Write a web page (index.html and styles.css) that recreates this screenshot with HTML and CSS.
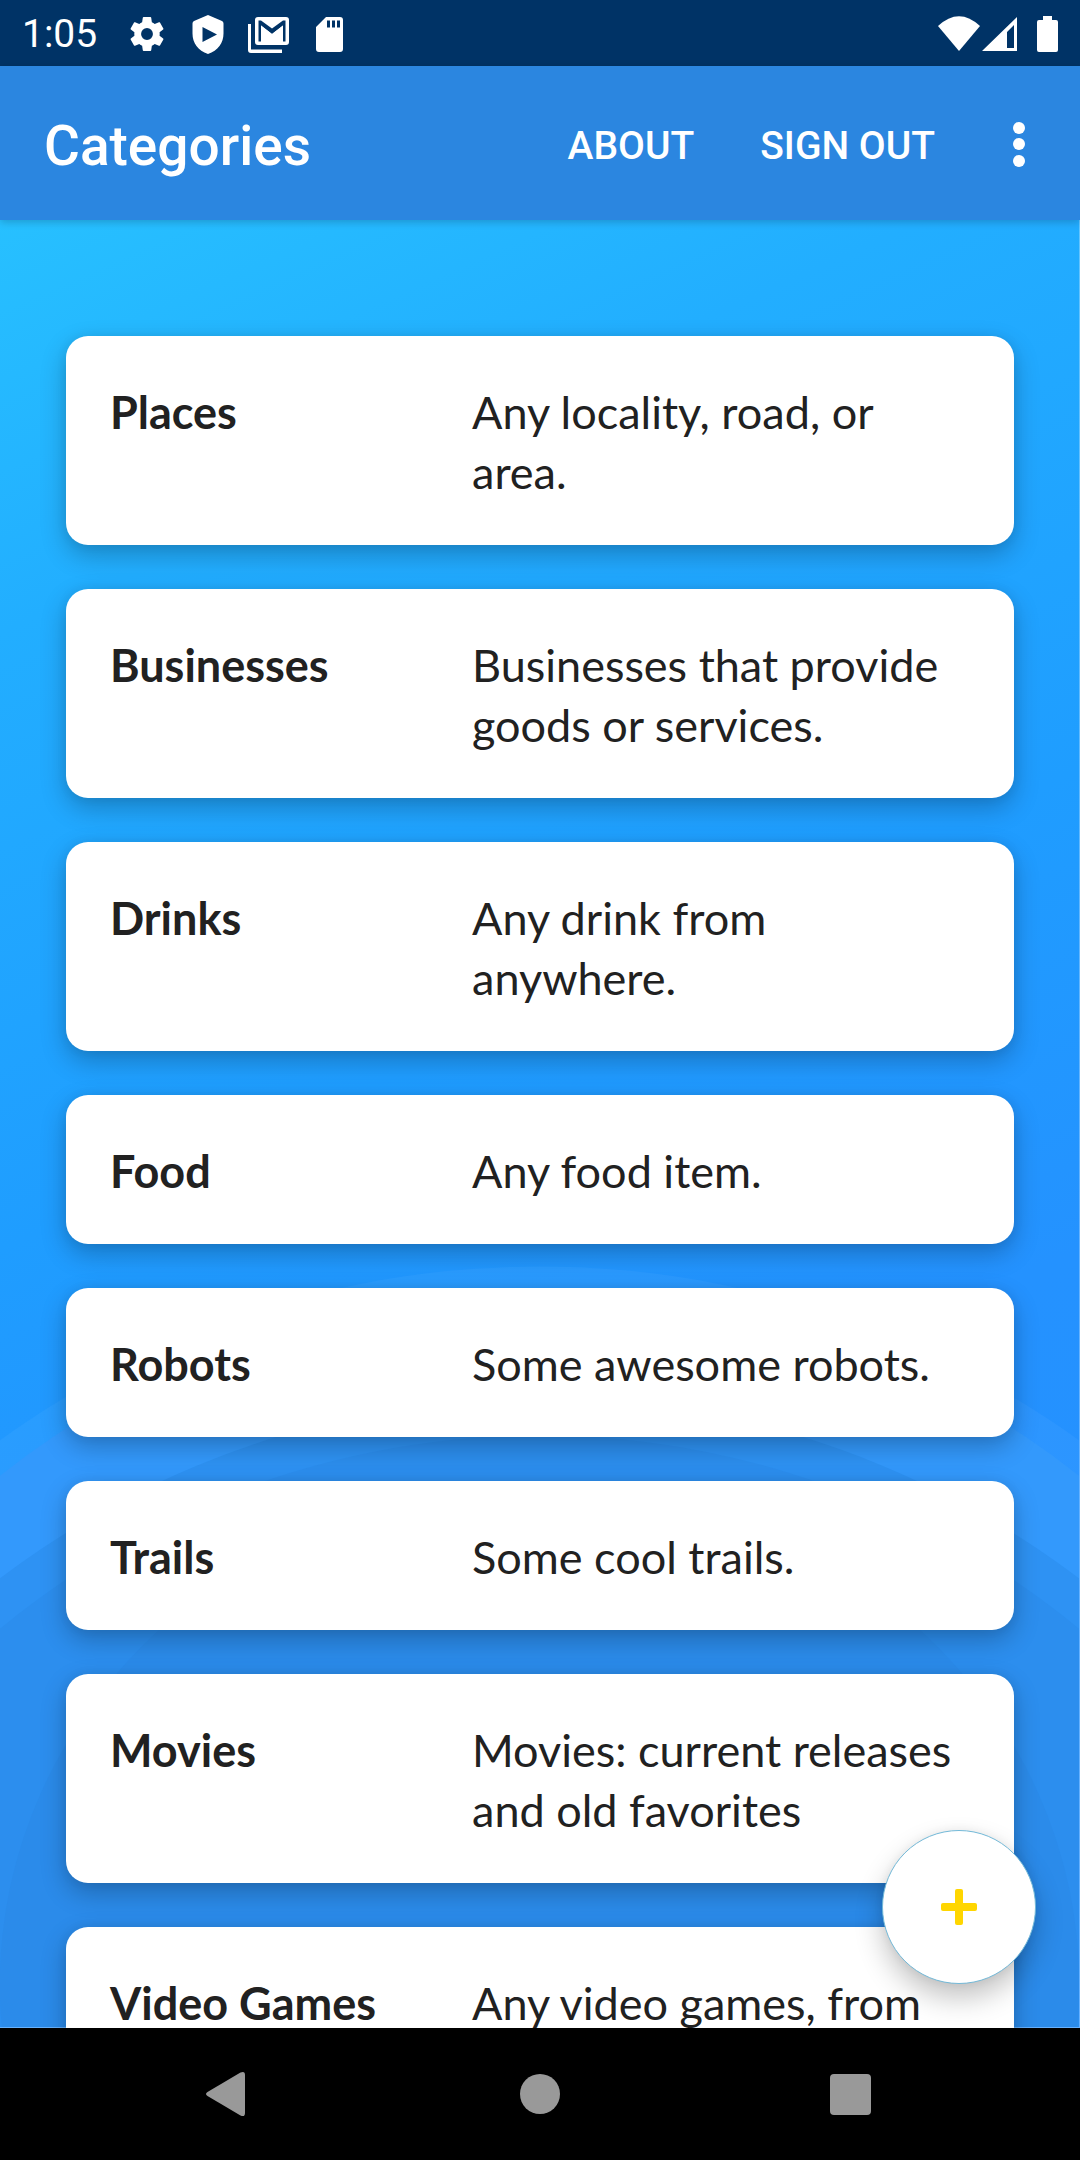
FILE: index.html
```html
<!DOCTYPE html>
<html lang="en">
<head>
<meta charset="utf-8">
<meta name="viewport" content="width=device-width">
<title>Categories</title>
<link rel="stylesheet" href="styles.css">
</head>
<body>
<div class="screen">
  <div class="status">
    <span class="time">1:05</span>
    <div class="notices">
      <svg class="status-icon" viewBox="0 0 24 26" aria-hidden="true"><path fill-rule="evenodd" transform="translate(0 1)" d="M19.43 12.98c.04-.32.07-.64.07-.98s-.03-.66-.07-.98l2.11-1.65c.19-.15.24-.42.12-.64l-2-3.46c-.12-.22-.39-.3-.61-.22l-2.49 1c-.52-.4-1.08-.73-1.69-.98l-.38-2.65A.488.488 0 0 0 14 2h-4c-.25 0-.46.18-.49.42l-.38 2.65c-.61.25-1.17.59-1.69.98l-2.49-1c-.23-.09-.49 0-.61.22l-2 3.46c-.13.22-.07.49.12.64l2.11 1.65c-.04.32-.07.65-.07.98s.03.66.07.98l-2.11 1.65c-.19.15-.24.42-.12.64l2 3.46c.12.22.39.3.61.22l2.49-1c.52.4 1.08.73 1.69.98l.38 2.65c.03.24.24.42.49.42h4c.25 0 .46-.18.49-.42l.38-2.65c.61-.25 1.17-.59 1.69-.98l2.49 1c.23.09.49 0 .61-.22l2-3.46c.12-.22.07-.49-.12-.64l-2.11-1.65zM12 15.5a3.5 3.5 0 1 1 0-7 3.500 3.500 0 0 1 0 7z"/></svg>
      <svg class="status-icon" viewBox="0 0 44 44" aria-hidden="true"><path fill-rule="evenodd" d="M22 3l14 6q1.500.7 1.500 2.500v10C37.500 31 32 38.500 22 42 12 38.500 6.500 31 6.500 21.500v-10Q6.500 9.700 8 9zM16.500 15v15L31 22.500z"/></svg>
      <svg class="status-icon" viewBox="0 0 44 44" aria-hidden="true"><path d="M1 12h3v25.500h31V41H4q-3 0-3-3z"/><path fill-rule="evenodd" d="M11 5h28q3 0 3 3v22q0 3-3 3H11q-3 0-3-3V8q0-3 3-3zm.500 3.500V29.500H14V13.500L25 22 36 13.500v16h2.500v-21H36L25 16.500 14 8.500z"/><path d="M14 13.500L25 22 36 13.500v16H14z"/></svg>
      <svg class="status-icon" viewBox="0 0 44 44" aria-hidden="true"><path fill-rule="evenodd" d="M18 5h14q3 0 3 3v29q0 3-3 3H11q-3 0-3-3V15zm1 3.500v7h3v-7zm5 0v7h3v-7zm5 0v7h3v-7z"/></svg>
    </div>
    <div class="system">
      <svg class="status-icon" viewBox="0 0 44 44" aria-hidden="true"><path d="M1 14Q22-5.500 43 14L22 39z"/></svg>
      <svg class="status-icon" viewBox="0 0 44 44" aria-hidden="true"><path fill-rule="evenodd" d="M36 5v34H1zM33 13l-7 7v16h7z"/></svg>
      <svg class="status-icon" viewBox="0 0 44 44" aria-hidden="true"><path d="M18 4h9v4h4q2 0 2 2v28q0 2-2 2H14q-2 0-2-2V10q0-2 2-2h4z"/></svg>
    </div>
  </div>

  <header class="appbar">
    <h1 class="title">Categories</h1>
    <button class="action" type="button">ABOUT</button>
    <button class="action" type="button">SIGN OUT</button>
    <button class="more" type="button" aria-label="More options">
      <svg class="more-icon" viewBox="0 0 66 66" aria-hidden="true"><circle cx="33" cy="15" r="6"/><circle cx="33" cy="31" r="6"/><circle cx="33" cy="48" r="6"/></svg>
    </button>
  </header>

  <main class="content">
    <svg class="rings" viewBox="0 0 1080 1808" preserveAspectRatio="xMidYMax slice" aria-hidden="true">
      <circle class="ring-1" cx="540" cy="1972" r="925"/>
      <circle class="ring-2" cx="540" cy="1940" r="871"/>
      <circle class="ring-3" cx="540" cy="2073" r="895"/>
      <circle class="ring-4" cx="540" cy="2066" r="850"/>
      <ellipse class="ring-5" cx="540" cy="1765" rx="540" ry="500"/>
    </svg>
    <ul class="list">
      <li class="card"><h2 class="name">Places</h2><p class="about">Any locality, road, or area.</p></li>
      <li class="card"><h2 class="name">Businesses</h2><p class="about">Businesses that provide goods or services.</p></li>
      <li class="card"><h2 class="name">Drinks</h2><p class="about">Any drink from anywhere.</p></li>
      <li class="card"><h2 class="name">Food</h2><p class="about">Any food item.</p></li>
      <li class="card"><h2 class="name">Robots</h2><p class="about">Some awesome robots.</p></li>
      <li class="card"><h2 class="name">Trails</h2><p class="about">Some cool trails.</p></li>
      <li class="card"><h2 class="name">Movies</h2><p class="about">Movies: current releases and old favorites</p></li>
      <li class="card"><h2 class="name">Video Games</h2><p class="about">Any video games, from</p></li>
    </ul>
    <button class="fab" type="button" aria-label="Add category">
      <svg class="plus" viewBox="0 0 36 36" aria-hidden="true"><rect x="14" width="8" height="36" rx="2"/><rect y="14" width="36" height="8" rx="2"/></svg>
    </button>
  </main>

  <nav class="navbar" aria-label="System">
    <button class="nav-button" type="button" aria-label="Back"><svg class="nav-icon" viewBox="0 0 66 66"><path d="M11.500 31L44.500 11.500Q49 9.500 49 14v38q0 4.500-4.500 2.500L11.500 35q-3-2 0-4z"/></svg></button>
    <button class="nav-button" type="button" aria-label="Home"><svg class="nav-icon" viewBox="0 0 66 66"><circle cx="33" cy="33" r="20"/></svg></button>
    <button class="nav-button" type="button" aria-label="Recent apps"><svg class="nav-icon" viewBox="0 0 66 66"><rect x="12" y="13" width="41" height="41" rx="4"/></svg></button>
  </nav>
</div>
</body>
</html>
```
FILE: styles.css
```css
* {
  box-sizing: border-box;
}

body {
  margin: 0;
  font-family: Roboto, sans-serif;
  color: #fff;
}

button {
  padding: 0;
  border: 0;
  background: none;
  color: inherit;
  font: inherit;
}

svg {
  display: block;
}

.screen {
  display: flex;
  flex-direction: column;
  height: 100vh;
}

.status {
  display: flex;
  align-items: center;
  height: 66px;
  padding: 2px 11px 0 22px;
  background: #003366;
}

.time {
  font-size: 39px;
}

.notices {
  display: flex;
  flex: 1;
  gap: 17px;
  padding-left: 28px;
}

.system {
  display: flex;
}

.status-icon {
  width: 44px;
  height: 44px;
  fill: #fff;
}

.appbar {
  position: relative;
  z-index: 1;
  display: flex;
  align-items: center;
  height: 154px;
  padding: 5px 10px 0 44px;
  background: #2b86e0;
  box-shadow: 0 2px 8px rgba(0, 0, 0, 0.2);
}

.title {
  flex: 1;
  margin: 0;
  font-size: 55px;
  font-weight: 500;
}

.action {
  padding: 0 33px;
  font-size: 39px;
  font-weight: 500;
}

.more {
  display: flex;
  justify-content: center;
  width: 102px;
}

.more-icon {
  width: 66px;
  height: 66px;
  fill: #fff;
}

.content {
  position: relative;
  flex: 1;
  min-height: 0;
  overflow: hidden;
  background: linear-gradient(156deg, #27c0ff 0%, #22aeff 18%, #1f9dff 45%, #2492ff 66%, #2590ff 100%);
}

.rings {
  position: absolute;
  inset: 0;
  width: 100%;
  height: 100%;
  border: solid rgba(255, 255, 255, 0.3);
  border-width: 0 1px 1px 0;
}

.ring-1 {
  fill: rgba(255, 255, 255, 0.04);
}

.ring-2 {
  fill: #3399fc;
}

.ring-3 {
  fill: #2e92f3;
}

.ring-4 {
  fill: #2c8eee;
}

.ring-5 {
  fill: #2b8bea;
}

.list {
  position: relative;
  display: flex;
  flex-direction: column;
  gap: 44px;
  margin: 0;
  padding: 116px 66px 44px;
  list-style: none;
}

.card {
  display: grid;
  grid-template-columns: 42fr 58fr;
  padding: 46px 42px 43px 44px;
  border-radius: 22px;
  background: #fff;
  box-shadow: 0 10px 26px rgba(0, 0, 0, 0.24), 0 0 12px rgba(0, 0, 0, 0.06);
  color: #212121;
}

.name,
.about {
  margin: 0;
  font-family: Lato, sans-serif;
  font-size: 45px;
  line-height: 60px;
}

.name {
  font-weight: 700;
}

.about {
  font-weight: 400;
}

.fab {
  position: absolute;
  right: 44px;
  bottom: 44px;
  display: grid;
  place-items: center;
  width: 154px;
  height: 154px;
  border: 1px solid #73b9d8;
  border-radius: 50%;
  background: #fff;
  box-shadow: 0 14px 28px rgba(0, 0, 0, 0.24), 0 0 10px rgba(0, 0, 0, 0.06);
}

.plus {
  width: 36px;
  height: 36px;
  fill: #ffd600;
}

.navbar {
  display: flex;
  align-items: center;
  justify-content: space-between;
  height: 132px;
  padding: 0 196px;
  background: #000;
}

.nav-icon {
  width: 66px;
  height: 66px;
  fill: #999;
}
```
